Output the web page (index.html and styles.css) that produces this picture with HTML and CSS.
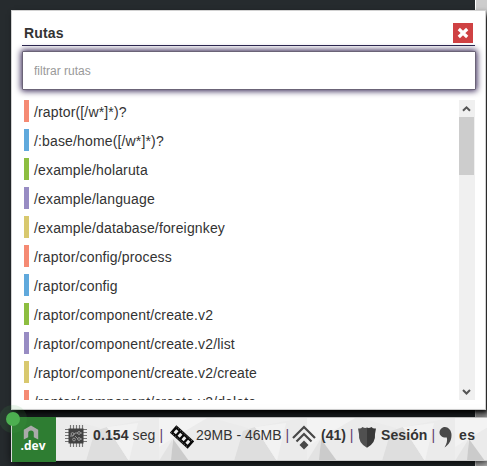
FILE: index.html
```html
<!DOCTYPE html>
<html lang="es">
<head>
<meta charset="utf-8">
<title>Rutas</title>
<link rel="stylesheet" href="styles.css">
</head>
<body>
<div class="page-scroll"></div>
<main class="layout">
  <section class="panel">
    <header class="panel-head">
      <h1>Rutas</h1>
      <button class="close" aria-label="Cerrar"><svg width="12" height="12" viewBox="0 0 12 12"><path d="M1.8 2 10.2 10M10.2 2 1.8 10" stroke="#fff" stroke-width="3.2"/></svg></button>
    </header>
    <input class="filter" type="text" placeholder="filtrar rutas">
    <div class="list-wrap">
      <ul class="routes">
        <li class="red">/raptor([/w*]*)?</li>
        <li class="blue">/:base/home([/w*]*)?</li>
        <li class="green">/example/holaruta</li>
        <li class="purple">/example/language</li>
        <li class="yellow">/example/database/foreignkey</li>
        <li class="red">/raptor/config/process</li>
        <li class="blue">/raptor/config</li>
        <li class="green">/raptor/component/create.v2</li>
        <li class="purple">/raptor/component/create.v2/list</li>
        <li class="yellow">/raptor/component/create.v2/create</li>
        <li class="red">/raptor/component/create.v2/delete</li>
      </ul>
      <div class="scrollbar">
        <svg width="16" height="17" viewBox="0 0 16 17"><path d="M4 10.8 7.5 7.3 11 10.8" fill="none" stroke="#555" stroke-width="2"/></svg>
        <div class="thumb"></div>
        <svg class="down" width="16" height="17" viewBox="0 0 16 17"><path d="M4 7 7.5 10.5 11 7" fill="none" stroke="#555" stroke-width="2"/></svg>
      </div>
    </div>
  </section>
  <footer class="bar">
    <div class="env">
      <svg width="16" height="15" viewBox="0 0 16 15"><path d="M.8 14.5V4.8L8 .5 15.2 4.8V14.5L10.8 12.3V8Q10.8 5.5 8 5.5T5.2 8V12.3Z" fill="#aaa"/></svg>
      <span>.dev</span>
      <i class="dot"></i>
    </div>
    <div class="stats">
      <svg class="facets" width="431" height="44" viewBox="0 0 431 44">
        <defs><g id="tile"><path d="M0 0H148V44H0Z" fill="#eee"/><path d="M0 0H50L13 22 0 30Z" fill="#f3f3f3"/><path d="M50 0 89 11 76 44H29L13 22Z" fill="#ebebeb"/><path d="M75 44 84 14 96 10 118 44Z" fill="#dedede"/><path d="M96 10 148 0V44H118Z" fill="#ebebeb"/><path d="M118 44 96 10 127 6Z" fill="#f2f2f2"/><path d="M0 44 13 23V44Z" fill="#e3e3e3"/><path d="M12 44 14 22 30 44Z" fill="#cbcbcb"/></g></defs>
        <use href="#tile" x="-45"/><use href="#tile" x="103"/><use href="#tile" x="251"/><use href="#tile" x="399"/>
      </svg>
      <svg class="icon cpu" width="22" height="22" viewBox="0 0 22 22"><path d="M5.5 0V22M8.5 0V22M11.5 0V22M14.5 0V22M17.5 0V22M0 4.5H22M0 7.5H22M0 10.5H22M0 13.5H22M0 16.5H22" stroke="#777" stroke-width="1.2"/><path d="M3.5 3.5H18.5V18.5H3.5Z" fill="#404040"/><path d="M5 11H8L10 8H13M10 11 13 14H17M13 8H17" fill="none" stroke="#aaa" stroke-width=".8"/><g fill="#404040" stroke="#aaa" stroke-width=".8"><circle cx="7.5" cy="9" r="1.4"/><circle cx="9" cy="14.5" r="1.4"/><circle cx="14" cy="8" r="1.4"/><circle cx="14" cy="14" r="1.4"/></g></svg>
      <span class="time"><b>0.154</b> seg <em>|</em></span>
      <svg class="icon film" width="24" height="24" viewBox="0 0 24 24"><g transform="rotate(42 12 12)"><path d="M0 7.1H24V16.9H0Z" fill="#080808"/><path d="M1 8.2H24M1 15.8H24" stroke="#bbb" stroke-width=".6" stroke-dasharray="1 1.5"/><path d="M2.5 10H5.5V14H2.5ZM7.8 10H10.8V14H7.8ZM13.1 10H16.1V14H13.1ZM18.4 10H21.4V14H18.4Z" fill="#eee"/></g></svg>
      <span class="memory">29MB - 46MB <em>|</em></span>
      <svg class="icon stack" width="26" height="25" viewBox="0 0 26 25"><path d="M2 13 13 2 24 13M5.5 16.5 13 9 20.5 16.5" fill="none" stroke="#484848" stroke-width="2.2"/><path d="M13 15.5 17.5 20 13 24.5 8.5 20Z" fill="#484848"/></svg>
      <span class="count"><b>(41)</b> <em>|</em></span>
      <svg class="icon shield" width="18" height="21" viewBox="0 0 18 21"><path d="M0 1.5Q3 2 4.5 0 7 1.5 9 .5V20.7Q0 16 1 7Z" fill="#505050"/><path d="M9 .5Q11 1.5 13.5 0 15 2 18 1.5L17 7Q18 16 9 20.7Z" fill="#393939"/></svg>
      <span class="session"><b>Sesión</b> <em>|</em></span>
      <svg class="icon comma" width="13" height="21" viewBox="0 0 13 21"><path d="M6 0C9 0 12.5 3 12.5 8 12.5 14 9.5 18 5.5 20.5 7.8 16.5 8.6 13.5 7.8 10.5 3.5 11 .5 8.5.5 5.5.5 2.5 3 0 6 0Z" fill="#484848"/></svg>
      <b class="lang">es</b>
    </div>
  </footer>
</main>
</body>
</html>
```
FILE: styles.css
```css
* { box-sizing: border-box; }
body {
  margin: 0;
  height: 466px;
  overflow: hidden;
  background: #262b2e;
  color: #333;
  font: 14px/22px "Liberation Sans", Arial, sans-serif;
}
.page-scroll {
  position: absolute;
  top: 0;
  right: 0;
  width: 12px;
  height: 466px;
  background: #cdcdcd;
  border-left: 1px solid #fff;
}
.layout {
  position: relative;
  padding: 10px 0 0 11px;
  display: flex;
  flex-direction: column;
  gap: 7px;
}
.panel {
  width: 475px;
  height: 400px;
  padding: 12px 10px 9px;
  background: #fff;
  border: 1px solid #d2d2d2;
  box-shadow: 3px 4px 6px #000;
}
.panel-head {
  display: flex;
  justify-content: space-between;
  height: 23px;
  border-bottom: 1px solid #2c2850;
}
h1 { margin: 0 0 0 2px; font-size: 14px; line-height: 20px; letter-spacing: .15px; }
.close {
  width: 20px;
  height: 20px;
  margin-right: 2px;
  padding: 0;
  border: 0;
  background: #cf4143;
  display: grid;
  place-items: center;
}
.filter {
  display: block;
  width: 454px;
  height: 39px;
  margin-top: 5px;
  padding: 0 11px;
  border: 1px solid #6b6477;
  border-radius: 1px;
  box-shadow: 0 0 6px 1px #302050;
  font: 12px "Liberation Sans", Arial, sans-serif;
  outline: none;
}
.filter::placeholder { color: #999; }
.list-wrap {
  display: flex;
  justify-content: space-between;
  width: 453px;
  height: 300px;
  margin-top: 10px;
  overflow: hidden;
}
.routes { margin: 0 0 0 2px; padding: 0; list-style: none; letter-spacing: .15px; }
.routes li {
  height: 22px;
  margin-bottom: 7px;
  padding-left: 5px;
  border-left: 5px solid;
  line-height: 24px;
}
.routes .red { border-color: #f58a73; }
.routes .blue { border-color: #60a9dc; }
.routes .green { border-color: #8dbe40; }
.routes .purple { border-color: #988cc3; }
.routes .yellow { border-color: #d8c86e; }
.scrollbar {
  width: 16px;
  height: 300px;
  background: #f0f0f0;
  display: flex;
  flex-direction: column;
}
.thumb { width: 15px; height: 58px; background: #cdcdcd; }
.down { margin-top: auto; }
.bar {
  display: flex;
  width: 476px;
  height: 44px;
  box-shadow: 2px 2px 10px #000;
}
.env {
  position: relative;
  width: 45px;
  height: 45px;
  padding-top: 8px;
  background: #2e7d32;
  border-left: 1px solid #ddd;
  display: flex;
  flex-direction: column;
  align-items: center;
  color: #fff;
}
.env svg { margin-right: 6px; }
.env span {
  margin: -1px 2px 0 0;
  font: bold 12px/13px "Open Sans", sans-serif;
}
.dot {
  position: absolute;
  left: -6px;
  top: -5px;
  width: 14px;
  height: 14px;
  border-radius: 50%;
  background: #4caf50;
  box-shadow: 0 0 0 7px rgba(76, 175, 80, .12);
}
.stats {
  position: relative;
  flex: 1;
  display: flex;
  align-items: center;
  overflow: hidden;
  border-top: 1px solid #bbb;
  border-bottom: 1px solid #ccc;
  white-space: nowrap;
  line-height: 20px;
}
.facets { position: absolute; left: 0; top: -1px; }
.icon, .stats span, .lang { position: relative; flex: none; }
.stats span, .lang { top: -4px; }
.stats em { font-style: normal; color: #624070; }
.cpu { margin-left: 9px; top: -3px; }
.time { margin-left: 6px; width: 77px; }
.time, .session { letter-spacing: .1px; }
.film { top: -2px; }
.memory { margin-left: 2px; width: 94px; }
.stack { margin-left: 1px; top: -2px; }
.count { margin-left: 4px; width: 37px; }
.shield { top: -2px; }
.session { margin-left: 5px; width: 58px; }
.comma { top: -2px; }
.lang { margin-left: 7px; letter-spacing: .4px; }
```
